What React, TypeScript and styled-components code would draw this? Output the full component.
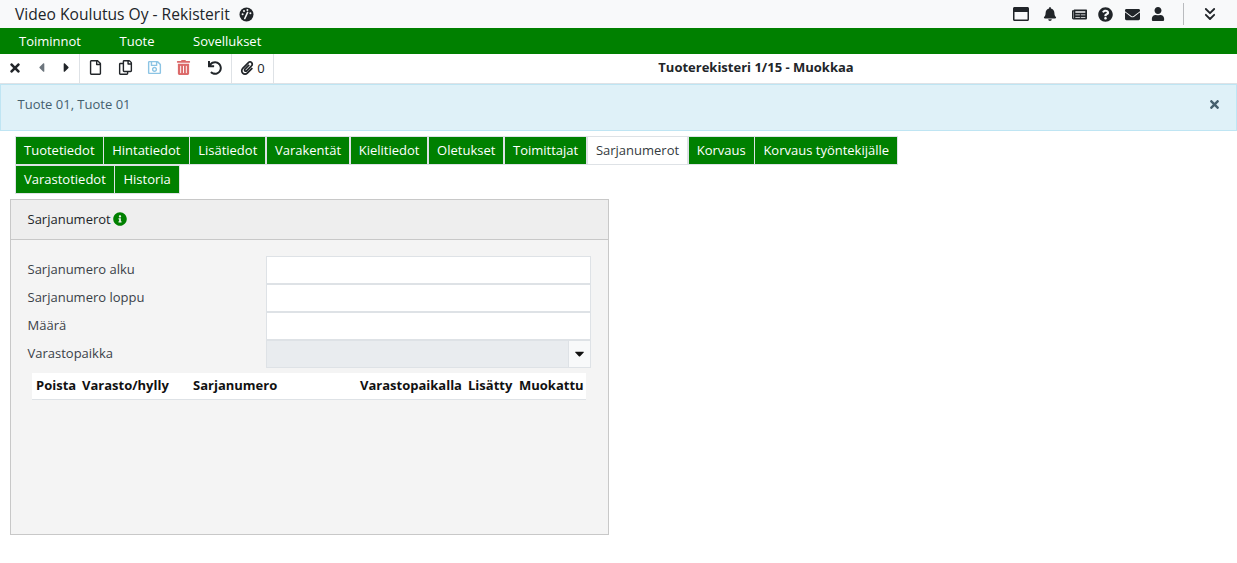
import { createGlobalStyle, styled } from "styled-components";
import {
  FaBell,
  FaCaretDown,
  FaCaretLeft,
  FaCaretRight,
  FaEnvelope,
  FaInfoCircle,
  FaNewspaper,
  FaPaperclip,
  FaQuestionCircle,
  FaRegCopy,
  FaRegFile,
  FaRegSave,
  FaRegWindowMaximize,
  FaTimes,
  FaTrashAlt,
  FaUndo,
  FaUser,
} from "react-icons/fa";
import { ChevronsDown } from "lucide-react";

const GREEN = "#008000";
const BORDER = "#dee2e6";

const GlobalStyle = createGlobalStyle`
  html, body {
    margin: 0;
    padding: 0;
    background: #fff;
    font-family: "Open Sans", "Liberation Sans", sans-serif;
    font-size: 13px;
    color: #212529;
  }
  * { box-sizing: border-box; }
`;

const TitleBar = styled.header`
  height: 28px;
  display: flex;
  align-items: center;
  justify-content: space-between;
  padding: 0 20px 0 15px;
  background: #f8f9fa;
`;

const Brand = styled.div`
  display: flex;
  align-items: center;
  gap: 9px;
  font-size: 15.6px;
  color: #212529;
`;

const TopIcons = styled.div`
  display: flex;
  align-items: center;
  color: #212529;
`;

const TopIcon = styled.span<{ $size?: number; $width: number }>`
  width: ${({ $width }) => $width}px;
  display: flex;
  justify-content: center;
  font-size: ${({ $size }) => $size ?? 14}px;

  svg {
    flex-shrink: 0;
  }
`;

const TopDivider = styled.span`
  width: 1px;
  height: 22px;
  background: #b9bbbe;
  margin: 0 19px 0 12px;
`;

const MenuBar = styled.nav`
  height: 26px;
  display: flex;
  align-items: center;
  padding: 0 0 1px 19px;
  gap: 38.6px;
  background: ${GREEN};
  color: #fff;
  font-size: 13px;
`;

const Toolbar = styled.div`
  position: relative;
  height: 30px;
  display: flex;
  background: #fff;
  border-bottom: 1px solid ${BORDER};
`;

const ToolGroup = styled.div`
  display: flex;
  align-items: center;
  height: 29px;
  padding-bottom: 2px;
  border-right: 1px solid ${BORDER};
`;

const ToolButton = styled.span<{ $color?: string; $width: number; $size?: number }>`
  width: ${({ $width }) => $width}px;
  display: flex;
  align-items: center;
  justify-content: center;
  gap: 3px;
  font-size: ${({ $size }) => $size ?? 14}px;
  color: ${({ $color }) => $color ?? "#212529"};
`;

const ClipCount = styled.span`
  font-size: 13px;
`;

const ToolTitle = styled.div`
  position: absolute;
  left: 275px;
  right: 0;
  top: 0;
  height: 25px;
  display: flex;
  align-items: center;
  justify-content: center;
  font-weight: 700;
  font-size: 13px;
`;

const Alert = styled.div`
  height: 47px;
  display: flex;
  align-items: center;
  justify-content: space-between;
  padding: 0 15.5px 7px 16.5px;
  background: #dff1f8;
  border: 1px solid #bfe5f3;
  color: #45606e;
  font-size: 13px;
`;

const AlertClose = styled.span`
  display: flex;
  font-size: 13px;
  color: #45606e;
`;

const Tabs = styled.div`
  display: flex;
  flex-wrap: wrap;
  row-gap: 0.4px;
  width: 900px;
  margin: 5px 0 0 15px;
`;

const Tab = styled.div<{ $active?: boolean }>`
  height: 29px;
  display: flex;
  align-items: center;
  padding: 0 8px 2px;
  border: 1px solid ${BORDER};
  background: ${({ $active }) => ($active ? "#fff" : GREEN)};
  color: ${({ $active }) => ($active ? "#343a40" : "#fff")};
  font-size: 13px;
  margin-right: -0.35px;
`;

const Panel = styled.section`
  width: 599px;
  height: 336px;
  margin: 4.6px 0 0 10px;
  background: #f4f4f4;
  border: 1px solid #c8c8c8;
`;

const PanelHeader = styled.div`
  height: 40px;
  display: flex;
  align-items: center;
  gap: 2px;
  padding-left: 16.5px;
  background: #eee;
  border-bottom: 1px solid #c8c8c8;
  font-size: 13px;
`;

const InfoIcon = styled.span`
  display: flex;
  font-size: 14px;
  color: ${GREEN};
`;

const Form = styled.div`
  display: flex;
  flex-direction: column;
  padding: 16px 17px 0 16.5px;
`;

const FormRow = styled.div`
  height: 28px;
  display: grid;
  grid-template-columns: 238.5px 325px;
  align-items: center;
`;

const Label = styled.label`
  font-size: 13px;
  color: #3a4148;
  padding-bottom: 2px;
`;

const TextInput = styled.div`
  height: 28px;
  background: #fff;
  border: 1px solid ${BORDER};
`;

const Select = styled.div`
  height: 28px;
  display: flex;
  justify-content: flex-end;
  background: #e9ecef;
  border: 1px solid ${BORDER};
`;

const SelectArrow = styled.span`
  width: 22px;
  display: flex;
  align-items: center;
  justify-content: center;
  background: #f8f9fa;
  border-left: 1px solid ${BORDER};
  font-size: 15px;
  color: #111;
`;

const GridHead = styled.div`
  height: 27px;
  margin: 5px 22px 0 21px;
  display: grid;
  grid-template-columns: 46px 111px 167px 108px 51px 1fr;
  align-items: center;
  padding: 0 0 2px 4px;
  background: #fff;
  border-bottom: 1px solid ${BORDER};
  font-weight: 700;
  font-size: 13px;
  color: #111;
  white-space: nowrap;
`;

const tabs = [
  "Tuotetiedot",
  "Hintatiedot",
  "Lisätiedot",
  "Varakentät",
  "Kielitiedot",
  "Oletukset",
  "Toimittajat",
  "Sarjanumerot",
  "Korvaus",
  "Korvaus työntekijälle",
  "Varastotiedot",
  "Historia",
];

const columns = ["Poista", "Varasto/hylly", "Sarjanumero", "Varastopaikalla", "Lisätty", "Muokattu"];

function GaugeIcon() {
  return (
    <svg width="15" height="15" viewBox="0 0 15 15">
      <circle cx="7.5" cy="7.5" r="7" fill="#212529" />
      <circle cx="3.6" cy="7.2" r="1" fill="#f8f9fa" />
      <circle cx="5" cy="4" r="1" fill="#f8f9fa" />
      <circle cx="8.4" cy="3" r="1" fill="#f8f9fa" />
      <circle cx="11.4" cy="6.2" r="1" fill="#f8f9fa" />
      <path d="M5.8 11.5 L8.6 5.4" stroke="#f8f9fa" strokeWidth="1.6" strokeLinecap="round" />
    </svg>
  );
}

export default function App() {
  return (
    <>
      <GlobalStyle />
      <TitleBar>
        <Brand>
          Video Koulutus Oy - Rekisterit
          <GaugeIcon />
        </Brand>
        <TopIcons>
          <TopIcon $width={24} $size={16}><FaRegWindowMaximize /></TopIcon>
          <TopIcon $width={34}><FaBell /></TopIcon>
          <TopIcon $width={24} $size={15}><FaNewspaper /></TopIcon>
          <TopIcon $width={28} $size={15}><FaQuestionCircle /></TopIcon>
          <TopIcon $width={26} $size={15}><FaEnvelope /></TopIcon>
          <TopIcon $width={26}><FaUser /></TopIcon>
          <TopDivider />
          <TopIcon $width={14}><ChevronsDown size={20} strokeWidth={2.2} /></TopIcon>
        </TopIcons>
      </TitleBar>
      <MenuBar>
        <span>Toiminnot</span>
        <span>Tuote</span>
        <span>Sovellukset</span>
      </MenuBar>
      <Toolbar>
        <ToolGroup>
          <ToolButton $width={29}><FaTimes /></ToolButton>
          <ToolButton $width={24} $size={15} $color="#6c757d"><FaCaretLeft /></ToolButton>
          <ToolButton $width={26} $size={15}><FaCaretRight /></ToolButton>
        </ToolGroup>
        <ToolGroup>
          <ToolButton $width={31} $size={15}><FaRegFile /></ToolButton>
          <ToolButton $width={28} $size={15}><FaRegCopy /></ToolButton>
          <ToolButton $width={30} $size={15} $color="#8cc4e4"><FaRegSave /></ToolButton>
          <ToolButton $width={29} $size={15} $color="#dc6a6a"><FaTrashAlt /></ToolButton>
          <ToolButton $width={33}><FaUndo /></ToolButton>
        </ToolGroup>
        <ToolGroup>
          <ToolButton $width={41}><FaPaperclip /><ClipCount>0</ClipCount></ToolButton>
        </ToolGroup>
        <ToolTitle>Tuoterekisteri 1/15 - Muokkaa</ToolTitle>
      </Toolbar>
      <Alert>
        Tuote 01, Tuote 01
        <AlertClose><FaTimes /></AlertClose>
      </Alert>
      <Tabs>
        {tabs.map((tab) => (
          <Tab key={tab} $active={tab === "Sarjanumerot"}>{tab}</Tab>
        ))}
      </Tabs>
      <Panel>
        <PanelHeader>
          Sarjanumerot
          <InfoIcon><FaInfoCircle /></InfoIcon>
        </PanelHeader>
        <Form>
          <FormRow>
            <Label>Sarjanumero alku</Label>
            <TextInput />
          </FormRow>
          <FormRow>
            <Label>Sarjanumero loppu</Label>
            <TextInput />
          </FormRow>
          <FormRow>
            <Label>Määrä</Label>
            <TextInput />
          </FormRow>
          <FormRow>
            <Label>Varastopaikka</Label>
            <Select>
              <SelectArrow><FaCaretDown /></SelectArrow>
            </Select>
          </FormRow>
        </Form>
        <GridHead>
          {columns.map((col) => (
            <span key={col}>{col}</span>
          ))}
        </GridHead>
      </Panel>
    </>
  );
}
